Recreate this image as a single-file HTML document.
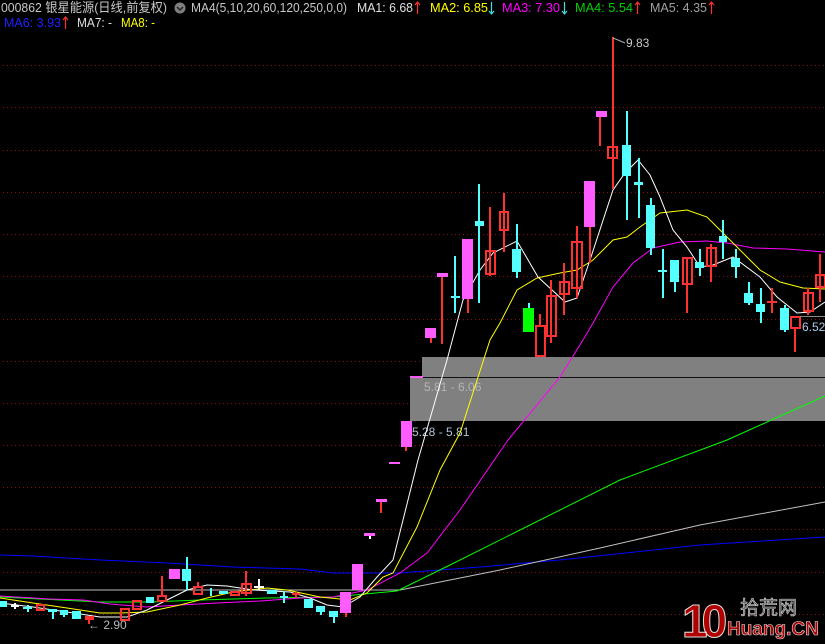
<!DOCTYPE html>
<html><head><meta charset="utf-8"><style>
html,body{margin:0;padding:0;background:#000;width:825px;height:644px;overflow:hidden}
svg{display:block}
text{font-family:"Liberation Sans","Noto Sans CJK SC",sans-serif}
</style></head><body>
<svg width="825" height="644" viewBox="0 0 825 644" xmlns="http://www.w3.org/2000/svg">
<rect width="825" height="644" fill="#000"/>
<g stroke="#8a1010" stroke-width="1" stroke-dasharray="1,3">
<line x1="3" y1="65.5" x2="825" y2="65.5"/><line x1="3" y1="107.5" x2="825" y2="107.5"/>
<line x1="3" y1="150.5" x2="825" y2="150.5"/><line x1="3" y1="192.5" x2="825" y2="192.5"/>
<line x1="3" y1="234.5" x2="825" y2="234.5"/><line x1="3" y1="276.5" x2="825" y2="276.5"/>
<line x1="3" y1="319.5" x2="825" y2="319.5"/><line x1="3" y1="361.5" x2="825" y2="361.5"/>
<line x1="3" y1="403.5" x2="825" y2="403.5"/><line x1="3" y1="445.5" x2="825" y2="445.5"/>
<line x1="3" y1="487.5" x2="825" y2="487.5"/><line x1="3" y1="529.5" x2="825" y2="529.5"/>
<line x1="3" y1="572.5" x2="825" y2="572.5"/><line x1="3" y1="614.5" x2="825" y2="614.5"/>
</g>
<rect x="422" y="357" width="403" height="20" fill="#808080"/>
<line x1="415" y1="377.5" x2="825" y2="377.5" stroke="#111" stroke-width="1"/>
<rect x="410" y="378" width="415" height="43" fill="#808080"/>
<text x="424" y="391" font-size="12" fill="#b4b4b4">5.81 - 6.06</text>
<text x="412" y="436" font-size="12" fill="#b4c4d4">5.28 - 5.81</text>
<g fill="none" stroke-width="1">
<polyline stroke="#0000ff" points="0,555 33,556 100,560 167,563 233,567 300,569 333,573 400,573 480,567 560,560 700,545 825,537"/>
<polyline stroke="#c0c0c0" points="0,590 400,590 500,570 600,548 700,525 825,502"/>
<polyline stroke="#00ff00" points="0,597 100,602 150,602 200,600 267,598 333,597 397,591 450,565 520,530 620,480 727,440 825,396"/>
<polyline stroke="#ff00ff" points="0,596 50,599 83,600 110,604 147,607 180,605 217,603 260,601 300,598 333,597 367,590 400,573 427,553 460,510 508,440 560,377 583,340 593,323 613,287 633,263 653,248 680,242 707,241 727,243 753,248 787,249 825,252"/>
<polyline stroke="#ffff00" points="0,598 33,603 67,608 100,613 120,613 147,612 180,605 207,598 233,592 267,588 287,590 320,597 350,600 367,593 383,577 393,573 417,527 440,470 460,433 490,340 500,323 517,290 537,278 560,273 577,270 593,260 613,240 627,237 640,227 660,213 687,210 707,217 720,230 733,243 750,260 760,270 780,282 803,288 825,289"/>
<polyline stroke="#ffffff" points="0,603 33,607 67,612 100,617 127,617 147,610 167,600 187,590 207,585 227,586 253,590 290,592 310,598 327,605 343,607 360,597 377,577 393,560 418,460 447,360 463,300 480,270 493,253 517,241 538,277 565,302 577,298 590,260 613,190 625,173 638,160 650,175 660,197 673,230 687,247 700,267 713,265 733,257 760,277 777,297 797,313 810,312 825,302"/>
</g>
<g stroke="#ff3232" stroke-width="2" fill="none">
<line x1="442" y1="276" x2="442" y2="344"/>
<line x1="490" y1="207" x2="490" y2="276"/><rect x="486" y="251" width="9" height="23"/>
<line x1="504" y1="193" x2="504" y2="252"/><rect x="500" y="212" width="8" height="18"/>
<line x1="540" y1="314" x2="540" y2="326"/><rect x="536" y="326" width="9" height="30"/>
<line x1="551" y1="280" x2="551" y2="343"/><rect x="547" y="296" width="9" height="40"/>
<line x1="564" y1="263" x2="564" y2="315"/><rect x="560" y="282" width="9" height="12"/>
<line x1="577" y1="226" x2="577" y2="298"/><rect x="572" y="242" width="10" height="46"/>
<line x1="590" y1="227" x2="590" y2="263"/>
<line x1="613" y1="37" x2="613" y2="189"/><rect x="608" y="147" width="9" height="11"/>
<line x1="600" y1="117" x2="600" y2="146"/>
<line x1="687" y1="258" x2="687" y2="313"/><rect x="683" y="258" width="9" height="26"/>
<line x1="711" y1="244" x2="711" y2="282"/><rect x="707" y="248" width="9" height="18"/>
<line x1="772" y1="288" x2="772" y2="313"/><line x1="767" y1="302" x2="777" y2="302"/>
<line x1="795" y1="328" x2="795" y2="352"/><rect x="791" y="317" width="9" height="11"/>
<line x1="808" y1="288" x2="808" y2="315"/><rect x="804" y="293" width="9" height="18"/>
<line x1="820" y1="254" x2="820" y2="302"/><rect x="816" y="275" width="9" height="12"/>
<rect x="37" y="605" width="7" height="5"/><line x1="89" y1="617" x2="89" y2="624"/><rect x="86" y="617" width="7" height="2"/>
<rect x="121" y="609" width="8" height="11"/><rect x="133" y="601" width="8" height="8"/>
<line x1="162" y1="576" x2="162" y2="596"/><rect x="158" y="596" width="8" height="5"/>
<rect x="194" y="587" width="8" height="7"/><line x1="198" y1="582" x2="198" y2="587"/>
<rect x="231" y="592" width="8" height="3"/>
<line x1="246" y1="571" x2="246" y2="596"/><rect x="242" y="584" width="9" height="9"/>
<line x1="296" y1="592" x2="296" y2="598"/><line x1="292" y1="594" x2="300" y2="594"/>
<line x1="381" y1="501" x2="381" y2="513"/><line x1="406" y1="447" x2="406" y2="451"/><line x1="346" y1="612" x2="346" y2="617"/>
</g>
<g fill="#ff5cff">
<rect x="425" y="328" width="11" height="10"/><rect x="430" y="338" width="2" height="5" fill="#ff3232"/>
<rect x="437" y="273" width="11" height="4"/>
<rect x="462" y="239" width="11" height="60"/><rect x="467" y="299" width="2" height="14" fill="#ff3232"/>
<rect x="584" y="181" width="11" height="46"/>
<rect x="596" y="111" width="11" height="6"/>
<rect x="169" y="569" width="11" height="10"/>
<rect x="340" y="592" width="11" height="21"/>
<rect x="352" y="564" width="11" height="26"/>
<rect x="364" y="533" width="11" height="3"/>
<rect x="376" y="499" width="11" height="3"/>
<rect x="389" y="462" width="11" height="2"/>
<rect x="401" y="421" width="11" height="26"/>
<rect x="410" y="376" width="13" height="2"/>
</g>
<g fill="#fff"><rect x="369" y="536" width="2" height="3"/><rect x="258" y="579" width="2" height="11"/><rect x="254" y="586" width="10" height="2"/><rect x="14" y="603" width="2" height="6"/><rect x="11" y="605" width="8" height="2"/></g>
<rect x="523" y="308" width="11" height="24" fill="#00ff00"/><rect x="528" y="303" width="2" height="5" fill="#54ffff"/>
<g fill="#54ffff">
<rect x="454" y="256" width="2" height="57"/><rect x="451" y="296" width="9" height="2"/>
<rect x="478" y="184" width="2" height="119"/><rect x="475" y="221" width="9" height="5"/>
<rect x="516" y="224" width="2" height="54"/><rect x="512" y="249" width="9" height="23"/>
<rect x="626" y="111" width="2" height="109"/><rect x="622" y="145" width="9" height="31"/>
<rect x="638" y="158" width="2" height="60"/><rect x="634" y="182" width="9" height="3"/>
<rect x="650" y="198" width="2" height="57"/><rect x="646" y="205" width="9" height="43"/>
<rect x="662" y="249" width="2" height="49"/><rect x="658" y="270" width="9" height="2"/>
<rect x="674" y="260" width="2" height="32"/><rect x="670" y="260" width="9" height="22"/>
<rect x="699" y="249" width="2" height="27"/><rect x="695" y="262" width="9" height="6"/>
<rect x="722" y="220" width="2" height="39"/><rect x="719" y="236" width="8" height="6"/>
<rect x="735" y="249" width="2" height="29"/><rect x="731" y="258" width="9" height="9"/>
<rect x="748" y="282" width="2" height="23"/><rect x="744" y="293" width="9" height="10"/>
<rect x="760" y="288" width="2" height="35"/><rect x="756" y="304" width="9" height="8"/>
<rect x="784" y="305" width="2" height="27"/><rect x="780" y="308" width="9" height="22"/>
<rect x="0" y="601" width="7" height="6"/>
<rect x="27" y="605" width="2" height="7"/><rect x="23" y="607" width="9" height="2"/>
<rect x="48" y="609" width="9" height="3"/><rect x="52" y="609" width="2" height="10"/>
<rect x="60" y="610" width="8" height="5"/><rect x="63" y="610" width="2" height="7"/>
<rect x="72" y="611" width="9" height="8"/>
<rect x="146" y="597" width="8" height="6"/>
<rect x="182" y="569" width="9" height="12"/><rect x="186" y="557" width="2" height="33"/>
<rect x="210" y="588" width="2" height="8"/>
<rect x="219" y="591" width="9" height="3"/>
<rect x="267" y="590" width="10" height="4"/>
<rect x="283" y="591" width="2" height="12"/><rect x="280" y="596" width="8" height="2"/>
<rect x="304" y="599" width="9" height="9"/>
<rect x="316" y="606" width="9" height="6"/><rect x="320" y="606" width="2" height="9"/>
<rect x="329" y="611" width="9" height="6"/><rect x="333" y="611" width="2" height="12"/>
</g>
<polyline points="613,38 618,40 625,43" fill="none" stroke="#aaa" stroke-width="1"/>
<text x="626" y="47" font-size="12" fill="#c8c8c8">9.83</text>
<line x1="800" y1="316.5" x2="825" y2="316.5" stroke="#888"/>
<text x="802" y="331" font-size="12" fill="#aac8e8">6.52</text>
<text x="88" y="629" font-size="12" fill="#b8b8b8">← 2.90</text>
<text x="682" y="637" font-size="46" font-weight="bold" fill="#b00000" stroke="#e0e0e0" stroke-width="1" letter-spacing="-6">10</text>
<text x="740" y="614" font-size="19" fill="#505050" stroke="#d8d8d8" stroke-width="0.6">拾荒网</text>
<text x="727" y="635" font-size="19" font-weight="bold" fill="#b00000" stroke="#e0e0e0" stroke-width="0.6">Huang.CN</text>
<g font-size="13" lengthAdjust="spacingAndGlyphs">
<text x="1" y="12" fill="#c8c8c8" textLength="166" lengthAdjust="spacingAndGlyphs">000862 银星能源(日线,前复权)</text>
<text x="191" y="12" fill="#c8c8c8" textLength="156" lengthAdjust="spacingAndGlyphs">MA4(5,10,20,60,120,250,0,0)</text>
<text x="357" y="12" fill="#e0e0e0" textLength="56" lengthAdjust="spacingAndGlyphs">MA1: 6.68</text>
<text x="430" y="12" fill="#ffff00" textLength="58" lengthAdjust="spacingAndGlyphs">MA2: 6.85</text>
<text x="502" y="12" fill="#ff00ff" textLength="58" lengthAdjust="spacingAndGlyphs">MA3: 7.30</text>
<text x="575" y="12" fill="#00d000" textLength="58" lengthAdjust="spacingAndGlyphs">MA4: 5.54</text>
<text x="650" y="12" fill="#a0a0a0" textLength="57" lengthAdjust="spacingAndGlyphs">MA5: 4.35</text>
<text x="4" y="27" fill="#2020ff" textLength="57" lengthAdjust="spacingAndGlyphs">MA6: 3.93</text>
<text x="77" y="27" fill="#e0e0e0" textLength="35" lengthAdjust="spacingAndGlyphs">MA7: -</text>
<text x="121" y="27" fill="#ffff00" textLength="34" lengthAdjust="spacingAndGlyphs">MA8: -</text>
</g>
<circle cx="180" cy="8" r="5.5" fill="#808080"/><path d="M177,7 L180,10 L183,7" stroke="#222" stroke-width="1.5" fill="none"/>
<g stroke-width="1.2" fill="none">
<path d="M417.5,14 V2 M415,5 L417.5,2 L420,5" stroke="#ff3030"/>
<path d="M491.5,2 V14 M489,11 L491.5,14 L494,11" stroke="#40e0e0"/>
<path d="M564.5,2 V14 M562,11 L564.5,14 L567,11" stroke="#40e0e0"/>
<path d="M637.5,14 V2 M635,5 L637.5,2 L640,5" stroke="#ff3030"/>
<path d="M711.5,14 V2 M709,5 L711.5,2 L714,5" stroke="#ff3030"/>
<path d="M65.5,29 V17 M63,20 L65.5,17 L68,20" stroke="#ff3030"/>
</g>
</svg>
</body></html>
